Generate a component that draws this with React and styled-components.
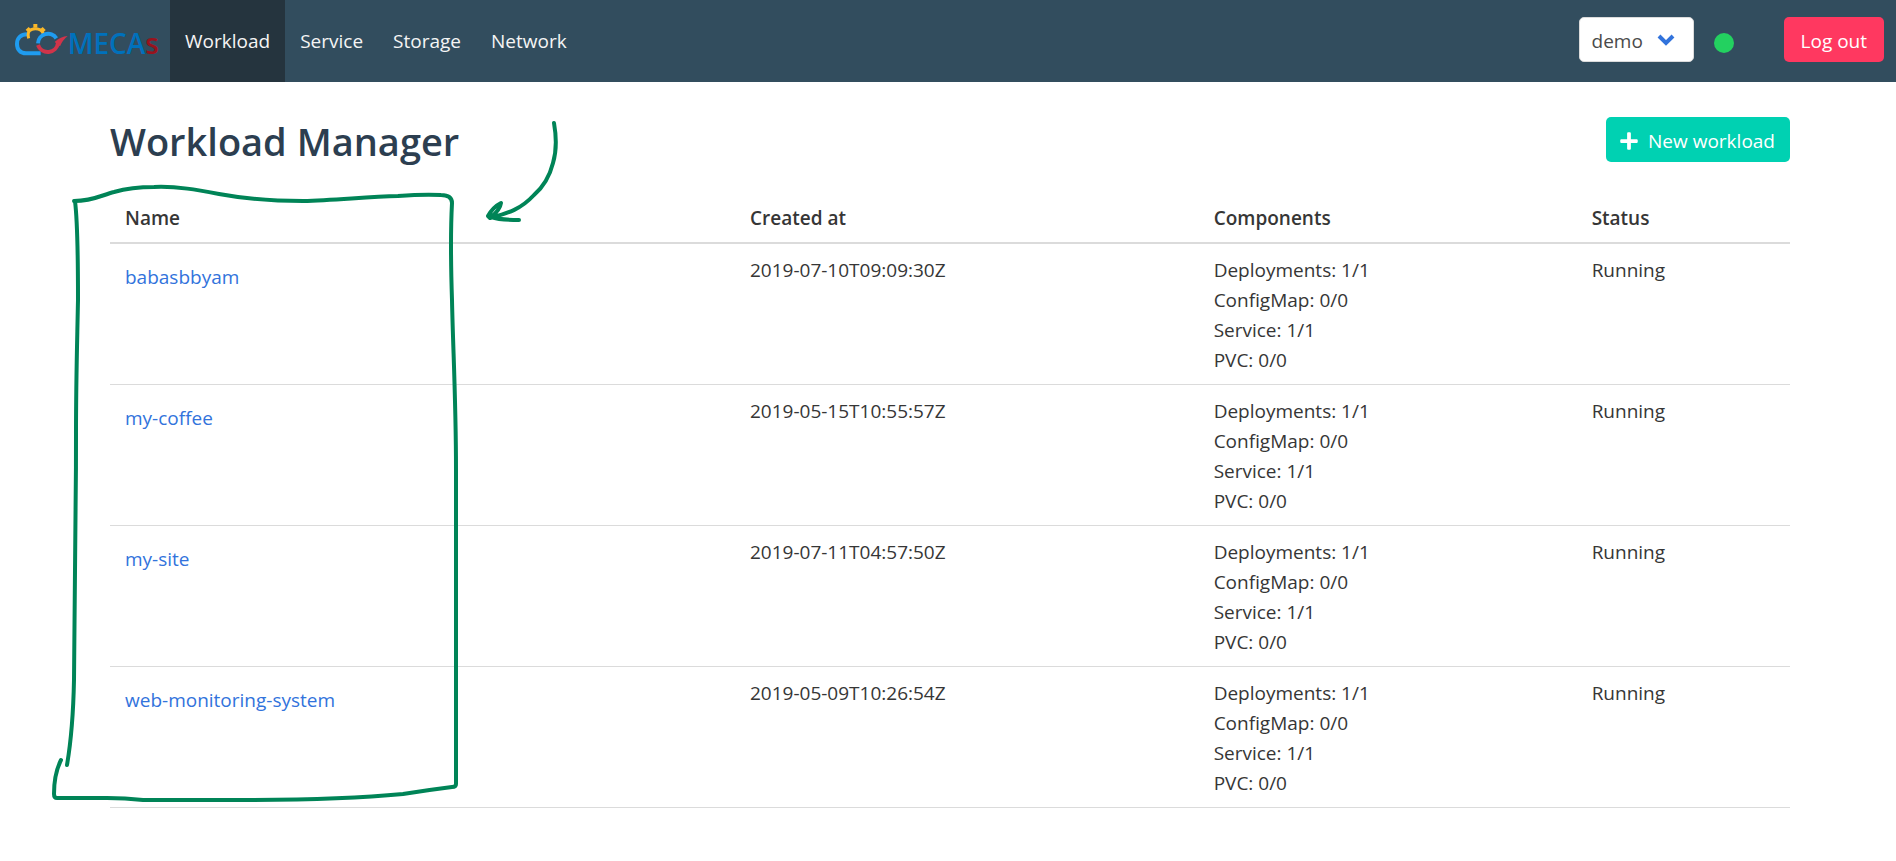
import styled, { createGlobalStyle } from "styled-components";
import { FaPlus } from "react-icons/fa";

const GlobalStyle = createGlobalStyle`
  * {
    box-sizing: border-box;
  }

  body {
    margin: 0;
    background-color: white;
    color: #363636;
    font-family: "Open Sans", "Noto Sans", sans-serif;
    font-size: 19px;
    line-height: 30px;
  }
`;

const StyledPage = styled.div`
  position: relative;
`;

const StyledNavbar = styled.nav`
  display: flex;
  align-items: stretch;
  height: 82px;
  background-color: #324d5e;
`;

const StyledBrand = styled.a`
  display: flex;
  align-items: center;
  padding: 0 15px;
`;

const StyledLogo = styled.svg`
  display: block;
  width: 140px;
  height: 35px;
  overflow: visible;
`;

const StyledNavLink = styled.a`
  display: flex;
  align-items: center;
  padding: 0 15px;
  background-color: ${({ $active }) => ($active ? "#25343e" : "transparent")};
  color: whitesmoke;
  font-weight: 500;
  text-decoration: none;
`;

const StyledNavEnd = styled.div`
  display: flex;
  align-items: center;
  margin-left: auto;
  padding-right: 12px;
  padding-bottom: 3px;
`;

const StyledSelectWrapper = styled.div`
  display: flex;
  align-items: center;
  position: relative;
`;

const StyledSelect = styled.select`
  appearance: none;
  width: 115px;
  height: 45px;
  padding: 2px 12px 0;
  border: 1px solid #dbdbdb;
  border-radius: 5px;
  background-color: white;
  color: #4a4a4a;
  font: inherit;
`;

const StyledChevron = styled.svg`
  position: absolute;
  right: 19px;
  width: 18px;
  height: 12px;
  pointer-events: none;
`;

const StyledStatusDot = styled.span`
  width: 20px;
  height: 20px;
  margin: 6px 50px 0 20px;
  border-radius: 50%;
  background-color: #23d160;
`;

const StyledButton = styled.button`
  display: flex;
  align-items: center;
  justify-content: center;
  gap: 9px;
  height: 45px;
  padding: ${({ $padding }) => $padding};
  border: none;
  border-radius: 5px;
  background-color: ${({ $color }) => $color};
  color: white;
  font: inherit;
  font-weight: 500;
`;

const StyledMain = styled.main`
  padding: 35px 106px 53px 110px;
`;

const StyledHeader = styled.header`
  display: flex;
  align-items: flex-start;
  justify-content: space-between;
  margin-bottom: 26px;
`;

const StyledTitle = styled.h1`
  margin: 0;
  color: #2c3e50;
  font-size: 38px;
  font-weight: 600;
  line-height: 49px;
`;

const StyledTable = styled.table`
  width: 100%;
  border-collapse: separate;
  border-spacing: 0;
  table-layout: fixed;
`;

const StyledHeadCell = styled.th`
  width: ${({ $width }) => $width};
  padding: 11px 15px 9px;
  border-bottom: 2px solid #dbdbdb;
  font-weight: 600;
  text-align: left;
`;

const StyledCell = styled.td`
  padding: 11px 15px 9px;
  border-bottom: 1px solid #dbdbdb;
  vertical-align: top;
`;

const StyledWorkloadLink = styled.a`
  display: inline-block;
  padding-top: 7px;
  color: #3273dc;
  text-decoration: none;
`;

const StyledMarker = styled.svg`
  position: absolute;
  top: 0;
  left: 0;
  width: 600px;
  height: 820px;
  fill: none;
  stroke: #008457;
  stroke-width: 4;
  stroke-linecap: round;
  stroke-linejoin: round;
  pointer-events: none;
`;

const navItems = ["Workload", "Service", "Storage", "Network"];

const columns = [
  { title: "Name", width: "37.2%" },
  { title: "Created at", width: "27.6%" },
  { title: "Components", width: "22.5%" },
  { title: "Status", width: "12.7%" },
];

const components = [
  "Deployments: 1/1",
  "ConfigMap: 0/0",
  "Service: 1/1",
  "PVC: 0/0",
];

const workloads = [
  { name: "babasbbyam", createdAt: "2019-07-10T09:09:30Z", status: "Running" },
  { name: "my-coffee", createdAt: "2019-05-15T10:55:57Z", status: "Running" },
  { name: "my-site", createdAt: "2019-07-11T04:57:50Z", status: "Running" },
  {
    name: "web-monitoring-system",
    createdAt: "2019-05-09T10:26:54Z",
    status: "Running",
  },
];

function Logo() {
  return (
    <StyledLogo viewBox="45 71 420 105" role="img" aria-label="MECAs">
      <g fill="none" strokeWidth="12">
        <path
          d="M82 102C62 102 51 114 51 131C51 148 62 159 78 159H122"
          stroke="#1f9cf0"
        />
        <path
          d="M86 114C80 93 92 85 106 85C119 85 127 91 130 100"
          stroke="#fbb829"
          strokeWidth="9"
        />
        <path d="M114 129A30 30 0 0 1 169 114" stroke="#1f9cf0" />
        <path d="M114 134A31 31 0 0 0 174 128" stroke="#d0344a" />
      </g>
      <path d="M203 107Q182 108 164 125L180 138Q187 120 203 107Z" fill="#d0344a" />
      <g fill="#fbb829">
        <path d="M100 71H112V82H100Z" />
        <path d="M77 88L86 80L93 87L84 96Z" />
        <path d="M120 87L128 80L137 89L129 97Z" />
      </g>
      <text
        x="203"
        y="162"
        fill="#0071bc"
        fontFamily="Open Sans"
        fontSize="84"
        fontWeight="600"
      >
        MECA<tspan fill="#98131d">s</tspan>
      </text>
    </StyledLogo>
  );
}

function Navbar() {
  return (
    <StyledNavbar>
      <StyledBrand href="/">
        <Logo />
      </StyledBrand>
      {navItems.map((item) => (
        <StyledNavLink key={item} href="#" $active={item === "Workload"}>
          {item}
        </StyledNavLink>
      ))}
      <StyledNavEnd>
        <StyledSelectWrapper>
          <StyledSelect aria-label="Namespace" defaultValue="demo">
            <option value="demo">demo</option>
          </StyledSelect>
          <StyledChevron viewBox="0 0 18 12">
            <path
              d="M2 2L9 9L16 2"
              fill="none"
              stroke="#3273dc"
              strokeWidth="4"
            />
          </StyledChevron>
        </StyledSelectWrapper>
        <StyledStatusDot />
        <StyledButton type="button" $color="#ff3860" $padding="2px 17px 0">
          Log out
        </StyledButton>
      </StyledNavEnd>
    </StyledNavbar>
  );
}

// Hand-drawn frame around the name column, with an arrow pointing at it
function Marker() {
  return (
    <StyledMarker viewBox="0 0 600 820" aria-hidden="true">
      <path d="M74 201C93 201 102 195 114 192C128 188 141 187 154 187C177 186 198 190 219 194C246 199 275 201 303 201C336 200 366 197 398 196Q424 194 441 195Q452 195 452 203C450 240 451 270 452 300C453 350 456 400 456 470V784Q456 787 452 787Q428 790 403 794C350 799 295 800 240 800H143Q125 798 107 798H57Q54 798 54 794Q54 774 61 760" />
      <path d="M75 201C78 225 78 260 78 300C77 350 76 380 76 433C76 520 75 610 74 680Q73 730 67 765" />
      <path d="M554 123C557 140 556 153 553 163C549 179 542 188 534 195C521 209 509 213 490 218L488 216Q493 207 501 203Q500 210 491 217Q500 220 519 220" />
    </StyledMarker>
  );
}

export default function App() {
  return (
    <StyledPage>
      <GlobalStyle />
      <Navbar />
      <StyledMain>
        <StyledHeader>
          <StyledTitle>Workload Manager</StyledTitle>
          <StyledButton type="button" $color="#00d1b2" $padding="2px 15px 0 13px">
            <FaPlus size={20} />
            New workload
          </StyledButton>
        </StyledHeader>
        <StyledTable>
          <thead>
            <tr>
              {columns.map(({ title, width }) => (
                <StyledHeadCell key={title} $width={width}>
                  {title}
                </StyledHeadCell>
              ))}
            </tr>
          </thead>
          <tbody>
            {workloads.map(({ name, createdAt, status }) => (
              <tr key={name}>
                <StyledCell>
                  <StyledWorkloadLink href="#">{name}</StyledWorkloadLink>
                </StyledCell>
                <StyledCell>{createdAt}</StyledCell>
                <StyledCell>
                  {components.map((component) => (
                    <div key={component}>{component}</div>
                  ))}
                </StyledCell>
                <StyledCell>{status}</StyledCell>
              </tr>
            ))}
          </tbody>
        </StyledTable>
      </StyledMain>
      <Marker />
    </StyledPage>
  );
}
